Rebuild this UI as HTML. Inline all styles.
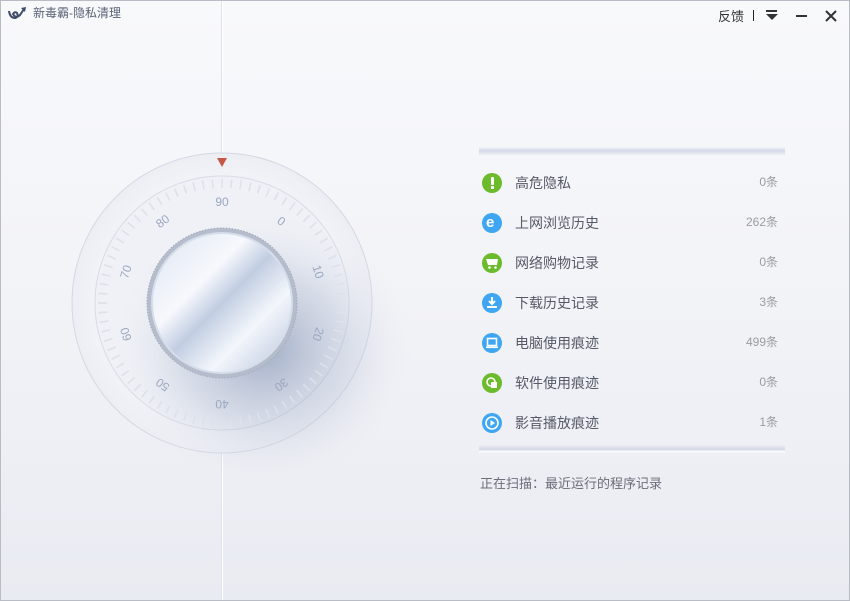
<!DOCTYPE html>
<html><head><meta charset="utf-8">
<style>
html,body{margin:0;padding:0}
body{width:850px;height:601px;overflow:hidden;font-family:"Liberation Sans","Noto Sans CJK SC",sans-serif;}
#w{position:absolute;left:0;top:0;width:848px;height:599px;border:1px solid #b9bcc4;background:linear-gradient(#f8f9fb,#f2f3f7 50%,#e9ebf2);overflow:hidden}
.vl{position:absolute;left:220px;top:0;width:1px;height:600px;background:#dfe2ea;border-right:1px solid #fff}
.title{position:absolute;left:32px;top:3px;font-size:12px;color:#5a6275}
.top{position:absolute;top:5px;font-size:13px;color:#333}
.row{position:absolute;left:481px;width:296px;height:20px}
.ic{position:absolute;left:0;top:0;width:20px;height:20px;border-radius:50%}
.g{background:#6cbb2c}.b{background:#3ea6f2}
.lb{position:absolute;left:33px;top:0px;font-size:14px;color:#555a66}
.ct{position:absolute;right:0;top:0px;font-size:12px;color:#9a9ca3}
.sep{position:absolute;left:478px;width:306px;height:8px}
</style></head><body>
<div id="w">
<div class="vl"></div>
<svg style="position:absolute;left:6px;top:4px" width="22" height="18" viewBox="0 0 22 18"><path d="M2 6 Q3 13 8 13 Q12 12 10 8 Q8 6 6 9 Q9 14 13 10 L17 4" fill="none" stroke="#3d4a68" stroke-width="2"/><path d="M14 3 L19 2 L18 7Z" fill="#3d4a68"/></svg>
<div class="title">新毒霸-隐私清理</div>
<div class="top" style="left:717px">反馈</div>
<div style="position:absolute;left:752px;top:9px;width:1px;height:11px;background:#222"></div>
<div style="position:absolute;left:765px;top:9px;width:11px;height:2px;background:#333"></div>
<div style="position:absolute;left:765px;top:13px;width:0;height:0;border-left:6px solid transparent;border-right:6px solid transparent;border-top:6px solid #333"></div>
<div style="position:absolute;left:795px;top:14px;width:11px;height:2px;background:#333"></div>
<svg style="position:absolute;left:824px;top:9px" width="12" height="12"><path d="M1 1L11 11M11 1L1 11" stroke="#333" stroke-width="2"/></svg>

<svg id="dial" style="position:absolute;left:0;top:80px" width="470" height="450" viewBox="0 80 470 450">
<defs>
<radialGradient id="sh" cx="0.5" cy="0.5" r="0.5"><stop offset="0" stop-color="#7f8fb0" stop-opacity=".7"/><stop offset="0.55" stop-color="#aab5cd" stop-opacity=".35"/><stop offset="1" stop-color="#e6e9f1" stop-opacity="0"/></radialGradient>
<linearGradient id="kb" x1="0" y1="0" x2="1" y2="1"><stop offset="0" stop-color="#dfe6f3"/><stop offset=".35" stop-color="#f6f8fc"/><stop offset=".5" stop-color="#c2cde2"/><stop offset=".7" stop-color="#f3f6fb"/><stop offset="1" stop-color="#b6c3dc"/></linearGradient>
<radialGradient id="out" cx=".5" cy=".5" r=".5"><stop offset=".8" stop-color="#f3f4f8"/><stop offset="1" stop-color="#eceef4"/></radialGradient>
</defs>
<circle cx="221" cy="302" r="150" fill="url(#out)" stroke="#d3d8e3"/>
<circle cx="221" cy="302" r="127" fill="#eff1f6" stroke="#d6dbe5"/>
<ellipse cx="262" cy="348" rx="150" ry="135" fill="url(#sh)"/>
<g id="ticks"></g>
<g id="nums" font-family="Liberation Sans" font-size="12" fill="#9ba7c0" text-anchor="middle"></g>
<circle cx="221" cy="302" r="75" fill="#b5bccb" stroke="#a4acbc" stroke-dasharray="1.5 1.5"/>
<circle cx="221" cy="302" r="71" fill="#d6deec"/>
<circle cx="221" cy="302" r="69" fill="url(#kb)"/>
<path d="M216 157 L226 157 L221 166Z" fill="#c45a44"/>
</svg>

<div class="sep" style="top:146px;background:linear-gradient(#f5f6fa,#d3d9e8 45%,#eef0f5)"></div>
<div class="row" style="top:172px"><div class="ic g"><div style="position:absolute;left:8.5px;top:4px;width:3px;height:8px;background:#fff;border-radius:1px"></div><div style="position:absolute;left:8.5px;top:13px;width:3px;height:3px;background:#fff"></div></div><div class="lb">高危隐私</div><div class="ct">0条</div></div>
<div class="row" style="top:212px"><div class="ic b"><div style="position:absolute;left:4px;top:1px;font:bold 15px 'Liberation Sans';color:#fff">e</div></div><div class="lb">上网浏览历史</div><div class="ct">262条</div></div>
<div class="row" style="top:252px"><div class="ic g"><svg width="20" height="20"><path d="M4 6H16L15 12H6Z" fill="#fff"/><circle cx="7.5" cy="14.5" r="1.3" fill="#fff"/><circle cx="13.5" cy="14.5" r="1.3" fill="#fff"/></svg></div><div class="lb">网络购物记录</div><div class="ct">0条</div></div>
<div class="row" style="top:292px"><div class="ic b"><svg width="20" height="20"><path d="M10 4V11M7 8L10 11L13 8" stroke="#fff" stroke-width="2" fill="none"/><rect x="5" y="13" width="10" height="2" fill="#fff"/></svg></div><div class="lb">下载历史记录</div><div class="ct">3条</div></div>
<div class="row" style="top:332px"><div class="ic b"><svg width="20" height="20"><rect x="5.5" y="5.5" width="9" height="7" fill="none" stroke="#fff" stroke-width="1.6"/><rect x="4" y="13.5" width="12" height="1.6" fill="#fff"/></svg></div><div class="lb">电脑使用痕迹</div><div class="ct">499条</div></div>
<div class="row" style="top:372px"><div class="ic g"><svg width="20" height="20"><circle cx="9" cy="9" r="4" fill="none" stroke="#fff" stroke-width="1.6"/><rect x="9" y="9" width="6" height="6" fill="#fff"/></svg></div><div class="lb">软件使用痕迹</div><div class="ct">0条</div></div>
<div class="row" style="top:412px"><div class="ic b"><svg width="20" height="20"><circle cx="10" cy="10" r="6" fill="none" stroke="#fff" stroke-width="1.6"/><path d="M8.5 7L13 10L8.5 13Z" fill="#fff"/></svg></div><div class="lb">影音播放痕迹</div><div class="ct">1条</div></div>
<div class="sep" style="top:444px;background:linear-gradient(#eceef4,#d3d8e6 55%,#fff 85%,#eef0f5)"></div>
<div style="position:absolute;left:479px;top:472px;font-size:13px;color:#6a6e78">正在扫描：最近运行的程序记录</div>
</div>
<script>
var t=document.getElementById('ticks'),n=document.getElementById('nums'),s='',u='';
for(var i=0;i<80;i++){var a=i*4.5*Math.PI/180,r1=115,r2=124;
s+='<line x1="'+(221+r1*Math.sin(a))+'" y1="'+(302-r1*Math.cos(a))+'" x2="'+(221+r2*Math.sin(a))+'" y2="'+(302-r2*Math.cos(a))+'" stroke="#dde1ea" stroke-width="1.6"/>';}
t.innerHTML=s;
var L=['90','0','10','20','30','40','50','60','70','80'];
for(var k=0;k<10;k++){var d=k*36,a=d*Math.PI/180,r=101,x=221+r*Math.sin(a),y=302-r*Math.cos(a);
u+='<text x="'+x+'" y="'+(y+4)+'" transform="rotate('+d+' '+x+' '+y+')">'+L[k]+'</text>';}
n.innerHTML=u;
</script>
</body></html>
